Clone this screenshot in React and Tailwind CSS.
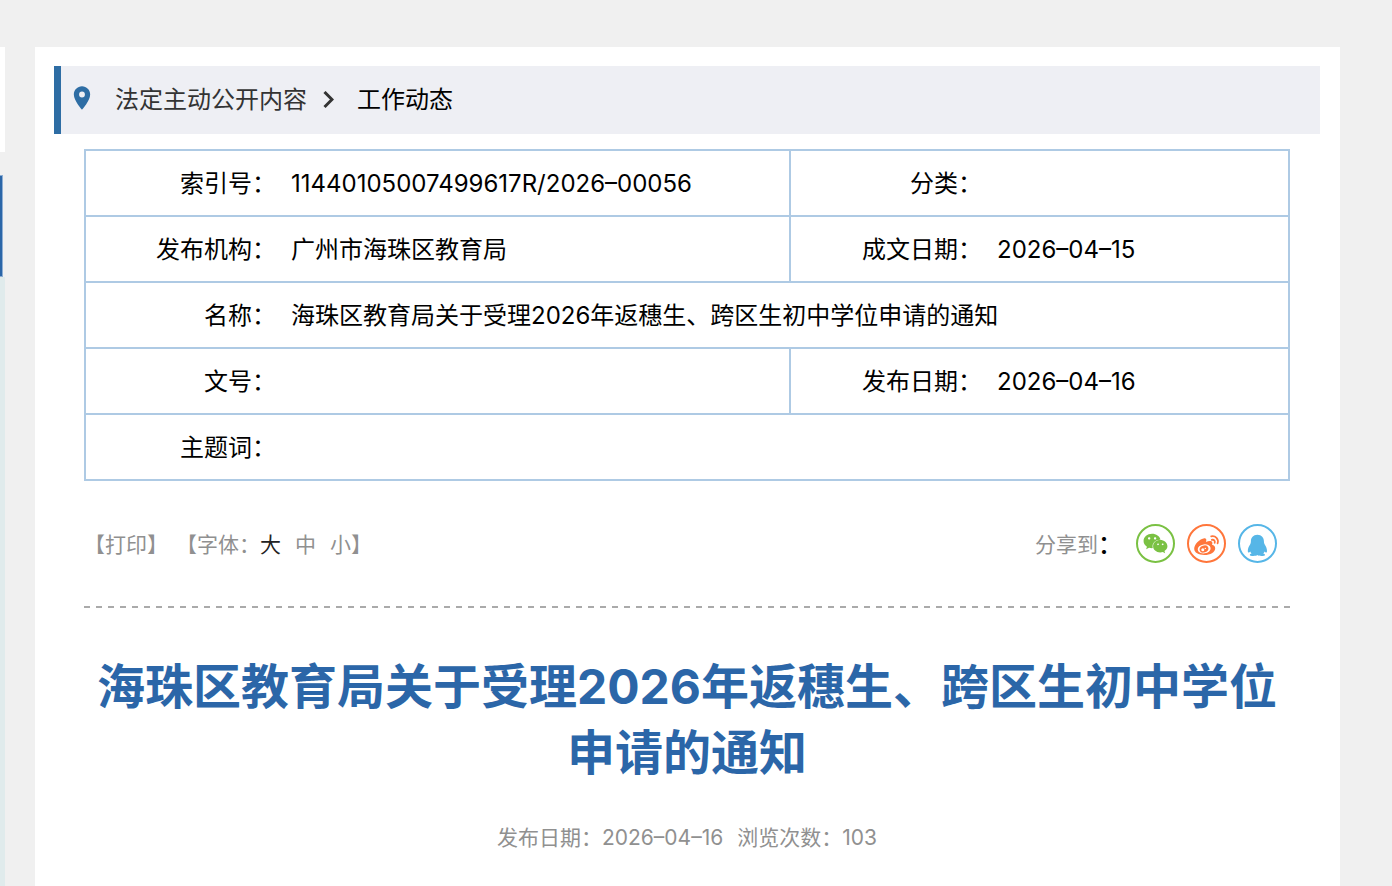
import { useState } from 'react'
import { FaWeixin } from 'react-icons/fa'
import { MdLocationOn } from 'react-icons/md'

const TITLE = '海珠区教育局关于受理2026年返穗生、跨区生初中学位申请的通知'

const FONT_SIZES = [
  { key: 'large', label: '大' },
  { key: 'medium', label: '中' },
  { key: 'small', label: '小' },
]

const SHARE_LINKS = [
  { name: '微信', Icon: WechatIcon, color: 'border-[#7ac143] text-[#7ac143]' },
  { name: '微博', Icon: WeiboIcon, color: 'border-[#ff763b] text-[#ff763b]' },
  { name: 'QQ', Icon: QqIcon, color: 'border-[#56b6e7] text-[#56b6e7]' },
]

function App() {
  return (
    <div className="flex min-h-screen bg-[#f0f0f0] pt-[47px] font-['Inter','Noto_Sans_CJK_SC',sans-serif] text-black">
      <Sidebar />
      <main className="ml-[30px] mr-[52px] min-w-0 flex-1 bg-white pt-[19px] pr-5 pb-8 pl-[19px]">
        <Breadcrumb />
        <div className="mx-[30px] mt-[15px]">
          <InfoTable />
          <Toolbar />
          <article className="pt-[46px] text-center">
            <h1 className="text-[48px] leading-[66px] font-bold text-[#2b66a8]">{TITLE}</h1>
            <p className="mt-9 flex justify-center gap-[14px] text-[21px] leading-[32px] text-[#909090]">
              <span>发布日期：2026–04–16</span>
              <span>浏览次数：103</span>
            </p>
          </article>
        </div>
      </main>
    </div>
  )
}

// Only the right edge of the side column shows
function Sidebar() {
  return (
    <aside className="flex w-[5px] shrink-0 flex-col">
      <div className="h-[105px] bg-white" />
      <div className="mt-[23px] h-[102px] w-[3px] border-y border-r border-[#8fafd4] bg-[#2b66a8]" />
      <div className="flex-1 bg-[#e0ebec]" />
    </aside>
  )
}

function Breadcrumb() {
  return (
    <nav className="flex h-[68px] items-center border-l-[7px] border-[#2e6da4] bg-[#eeeff4] pl-[7px] text-2xl">
      <MdLocationOn className="mb-1 size-7 text-[#2e6da4]" />
      <a href="#content" className="ml-[19px] text-[#333]">
        法定主动公开内容
      </a>
      <svg viewBox="0 0 12 18" className="mx-[15px] h-[18px] w-3 shrink-0" fill="none" stroke="#333" strokeWidth="3">
        <path d="M2.500 1 10 8.500 2.500 16" />
      </svg>
      <a href="#news" className="ml-2">
        工作动态
      </a>
    </nav>
  )
}

function InfoTable() {
  return (
    <table className="w-full table-fixed border-collapse border-2 border-[#aecae4] text-2xl">
      <colgroup>
        <col className="w-[191px]" />
        <col className="w-[514px]" />
        <col className="w-[192px]" />
        <col />
      </colgroup>
      <tbody>
        <tr className="h-[66px] border-b-2 border-[#aecae4]">
          <Label>索引号：</Label>
          <Value>11440105007499617R/2026–00056</Value>
          <Label divided>分类：</Label>
          <Value />
        </tr>
        <tr className="h-[66px] border-b-2 border-[#aecae4]">
          <Label>发布机构：</Label>
          <Value>广州市海珠区教育局</Value>
          <Label divided>成文日期：</Label>
          <Value>2026–04–15</Value>
        </tr>
        <tr className="h-[66px] border-b-2 border-[#aecae4]">
          <Label>名称：</Label>
          <Value colSpan={3}>{TITLE}</Value>
        </tr>
        <tr className="h-[66px] border-b-2 border-[#aecae4]">
          <Label>文号：</Label>
          <Value />
          <Label divided>发布日期：</Label>
          <Value>2026–04–16</Value>
        </tr>
        <tr className="h-[66px]">
          <Label>主题词：</Label>
          <Value colSpan={3} />
        </tr>
      </tbody>
    </table>
  )
}

function Label({ children, divided }) {
  return (
    <th
      scope="row"
      className={`px-0 pt-0.5 pb-0 text-right font-normal whitespace-nowrap ${divided ? 'border-l-2 border-[#aecae4]' : ''}`}
    >
      {children}
    </th>
  )
}

function Value({ children, colSpan }) {
  return (
    <td colSpan={colSpan} className="pt-0.5 pr-0 pb-0 pl-[15px]">
      {children}
    </td>
  )
}

function Toolbar() {
  const [fontSize, setFontSize] = useState('large')

  return (
    <>
      <div className="flex items-center justify-between py-[43px] pr-[13px] text-[21px] text-[#909090]">
        <div className="flex items-center pt-[3px]">
          <button type="button" onClick={() => window.print()}>
            【打印】
          </button>
          <span className="ml-2">【字体：</span>
          <div className="flex gap-[14px]">
            {FONT_SIZES.map(({ key, label }) => (
              <button
                key={key}
                type="button"
                onClick={() => setFontSize(key)}
                className={fontSize === key ? 'text-[#222]' : ''}
              >
                {label}
              </button>
            ))}
          </div>
          <span>】</span>
        </div>
        <div className="flex items-center">
          <span className="pt-[3px]">分享到</span>
          <span className="mr-[14px] pt-[3px] text-2xl font-medium text-black">：</span>
          <div className="flex gap-3">
            {SHARE_LINKS.map(({ name, Icon, color }) => (
              <a
                key={name}
                href="#share"
                aria-label={name}
                className={`grid size-[39px] place-items-center rounded-full border-2 ${color}`}
              >
                <Icon />
              </a>
            ))}
          </div>
        </div>
      </div>
      <div className="h-0.5 bg-[repeating-linear-gradient(90deg,#aaa_0_6px,transparent_6px_12px)]" />
    </>
  )
}

function WechatIcon() {
  return <FaWeixin className="size-[25px]" />
}

function WeiboIcon() {
  return (
    <svg viewBox="2 2 35 35" className="size-[35px]" fill="currentColor">
      <path d="M16.6 14.4c1.8-.5 3 .4 2.700 2.200l-.3 1.400c2.600-1.100 5.600-1.500 6.300.4.300.8-.1 1.700-.3 2.400 2 .6 3.200 1.800 3.200 3.600 0 3.600-5 6.600-10.800 6.600s-10.200-2.300-10.200-6.200c0-4.500 5.200-9.700 9.400-10.400z" />
      <ellipse cx="17.200" cy="24.900" rx="6.500" ry="4.500" fill="#fff" transform="rotate(-8 17 25)" />
      <ellipse cx="17" cy="25" rx="4.500" ry="3.500" transform="rotate(-18 17 25)" />
      <circle cx="15.800" cy="25.800" r="1.500" fill="#fff" />
      <circle cx="18.300" cy="24.400" r=".7" fill="#fff" />
      <g fill="none" stroke="currentColor" strokeWidth="1.800" strokeLinecap="round">
        <path d="M24.200 12.300c4.300-.9 7.800 2.700 6.400 7" />
        <path d="M24.800 15.800c2.100-.4 3.500 1 2.900 3" />
      </g>
    </svg>
  )
}

function QqIcon() {
  return (
    <svg viewBox="2 2 35 35" className="size-[35px]" fill="currentColor">
      <path d="M19.400 10.800c-4.200 0-6.500 3-6.500 6.500 0 1.300-.2 2.300-.8 3.300-1.300 2.100-2.300 4.100-2.300 6.300 0 1.200.4 1.600.9 1.600.6 0 1.100-.5 1.600-1.100.3.900.7 1.600 1.300 2.200-1 .3-1.800.7-1.800 1.300 0 .8 1.600 1.100 3.500 1.100 1.800 0 3.300-.3 4.100-.9.800.6 2.300.9 4.100.9 1.900 0 3.500-.3 3.500-1.100 0-.6-.8-1-1.800-1.300.6-.6 1-1.300 1.300-2.200.5.600 1 1.100 1.600 1.100.5 0 .9-.4.9-1.600 0-2.200-1-4.200-2.300-6.300-.6-1-.8-2-.8-3.300 0-3.500-2.300-6.500-6.500-6.500z" />
    </svg>
  )
}

export default App
